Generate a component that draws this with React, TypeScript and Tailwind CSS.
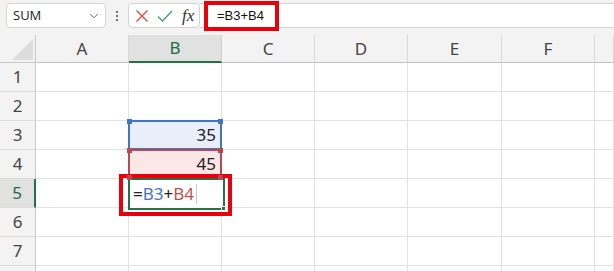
import { ChevronDown } from "lucide-react";

const COLS = ["A", "B", "C", "D", "E", "F", ""];
const ROWS = [1, 2, 3, 4, 5, 6, 7, 8];

const cellFont = { fontFamily: '"Noto Sans", "Open Sans", sans-serif' };

function Toolbar() {
  return (
    <div className="flex h-[35px] items-start bg-[#f3f3f3] pt-[3px]">
      <div className="ml-[6px] flex h-[25px] w-[100px] items-center justify-between rounded-[4px] border border-[#d4d4d4] bg-white pl-[6px] pr-[4px]">
        <span className="text-[13px] text-[#222]">SUM</span>
        <ChevronDown className="h-[14px] w-[14px] text-[#555]" strokeWidth={1.5} />
      </div>
      <div className="flex h-[25px] w-[22px] flex-col items-center justify-center gap-[2px]">
        <span className="h-[2px] w-[2px] rounded-full bg-[#444]" />
        <span className="h-[2px] w-[2px] rounded-full bg-[#444]" />
        <span className="h-[2px] w-[2px] rounded-full bg-[#444]" />
      </div>
      <div className="flex h-[25px] w-[72px] items-center rounded-[4px] border border-[#d4d4d4] bg-white pl-[5px]">
        <svg width="14" height="14" viewBox="0 0 14 14" className="ml-[1px]">
          <path d="M1.5 1.5 L12.5 12.5 M12.5 1.5 L1.5 12.5" stroke="#e0484a" strokeWidth="1.4" fill="none" />
        </svg>
        <svg width="16" height="14" viewBox="0 0 16 14" className="ml-[8px]">
          <path d="M1 7.5 L5.5 12 L15 2" stroke="#3ea26c" strokeWidth="1.4" fill="none" />
        </svg>
        <span
          className="ml-[9px] text-[17px] italic text-[#333]"
          style={{ fontFamily: '"Liberation Serif", "DejaVu Serif", serif' }}
        >
          fx
        </span>
      </div>
      <div className="flex h-[25px] flex-1 items-center border-y border-[#d4d4d4] bg-white">
        {/* red callout around the formula text */}
        <div
          className="-my-[3px] ml-[4px] flex h-[30px] w-[75px] items-center border-4 border-[#e8000b] pl-[9px] text-[13px] text-[#111]"
          style={{ fontFamily: '"Liberation Sans", Arial, sans-serif' }}
        >
          =B3+B4
        </div>
      </div>
    </div>
  );
}

function Corners({ color, top = true, bottom = true }: { color: string; top?: boolean; bottom?: boolean }) {
  const sq = "absolute z-10 h-[5px] w-[5px]";
  return (
    <>
      {top && <span className={`${sq} -left-[3px] -top-[3px]`} style={{ backgroundColor: color }} />}
      {top && <span className={`${sq} -right-[3px] -top-[3px]`} style={{ backgroundColor: color }} />}
      {bottom && <span className={`${sq} -bottom-[3px] -left-[3px]`} style={{ backgroundColor: color }} />}
      {bottom && <span className={`${sq} -bottom-[3px] -right-[3px]`} style={{ backgroundColor: color }} />}
    </>
  );
}

function Cell({ c, r }: { c: string; r: number }) {
  const base = "flex items-end pb-[1px] pr-[4px] text-[17px] leading-[24px] text-[#222]";
  if (c === "B" && r === 3) {
    return (
      <div className={`${base} relative -ml-px -mt-px justify-end border-2 border-[#4472c4] bg-[#e8eefa]`} style={cellFont}>
        35
        <Corners color="#4472c4" bottom={false} />
      </div>
    );
  }
  if (c === "B" && r === 4) {
    return (
      <div className={`${base} relative -ml-px -mt-px justify-end border-2 border-[#b84a4f] bg-[#fce6e6]`} style={cellFont}>
        45
        <Corners color="#b84a4f" />
      </div>
    );
  }
  if (c === "B" && r === 5) {
    return (
      <div className={`${base} relative z-[5] -mb-[2px] -ml-px -mr-[3px] -mt-px justify-start border-2 border-[#217346] bg-white pb-[2px]`} style={cellFont}>
        {/* red callout around the active cell */}
        <span className="absolute -bottom-[8px] -left-[11px] -right-[9px] -top-[6px] border-4 border-[#e8000b]" />
        <span className="flex items-center pl-[3px]">
          <span>=</span>
          <span className="text-[#4472c4]">B3</span>
          <span>+</span>
          <span className="text-[#c0504d]">B4</span>
          <span className="ml-[2px] h-[20px] w-px bg-[#c8c8c8]" />
        </span>
        <span className="absolute -bottom-[3px] -right-[3px] h-[5px] w-[5px] border border-white bg-[#217346]" />
      </div>
    );
  }
  return <div className={`${base} border-b border-r border-[#e1e1e1] bg-white`} />;
}

function Row({ r }: { r: number }) {
  return (
    <>
      <div
        className={
          r === 5
            ? "flex items-center justify-center border-b border-r-2 border-b-[#dcdcdc] border-r-[#217346] bg-[#e1e1e1] text-[17px] text-[#1e6b41]"
            : "flex items-center justify-center border-b border-r border-b-[#dcdcdc] border-r-[#c8c8c8] bg-[#f3f3f3] text-[17px] text-[#444]"
        }
        style={cellFont}
      >
        {r < 8 ? r : ""}
      </div>
      {COLS.map((c, i) => (
        <Cell key={r + "-" + i} c={c} r={r} />
      ))}
    </>
  );
}

function Grid() {
  return (
    <div className="grid grid-cols-[36px_93px_93px_93px_93px_94px_93px_1fr] grid-rows-[28px_29px_29px_29px_29px_29px_29px_29px_29px]">
      <div className="border-b border-r border-[#c8c8c8] bg-[#f3f3f3]">
        <svg width="36" height="28" viewBox="0 0 36 28">
          <polygon points="33,4 33,25 12,25" fill="#dcdcdc" />
        </svg>
      </div>
      {COLS.map((c, i) => (
        <div
          key={"h" + i}
          className={
            c === "B"
              ? "flex items-center justify-center border-b-2 border-r border-b-[#217346] border-r-[#d0d0d0] bg-[#e1e1e1] text-[17px] text-[#1e6b41]"
              : "flex items-center justify-center border-b border-r border-b-[#c2c2c2] border-r-[#d8d8d8] bg-[#f3f3f3] text-[17px] text-[#444]"
          }
          style={cellFont}
        >
          {c}
        </div>
      ))}
      {ROWS.map((r) => (
        <Row key={r} r={r} />
      ))}
    </div>
  );
}

export default function App() {
  return (
    <div
      className="h-[271px] w-[614px] overflow-hidden bg-white"
      style={{ fontFamily: '"Open Sans", "Noto Sans", sans-serif' }}
    >
      <Toolbar />
      <Grid />
    </div>
  );
}
